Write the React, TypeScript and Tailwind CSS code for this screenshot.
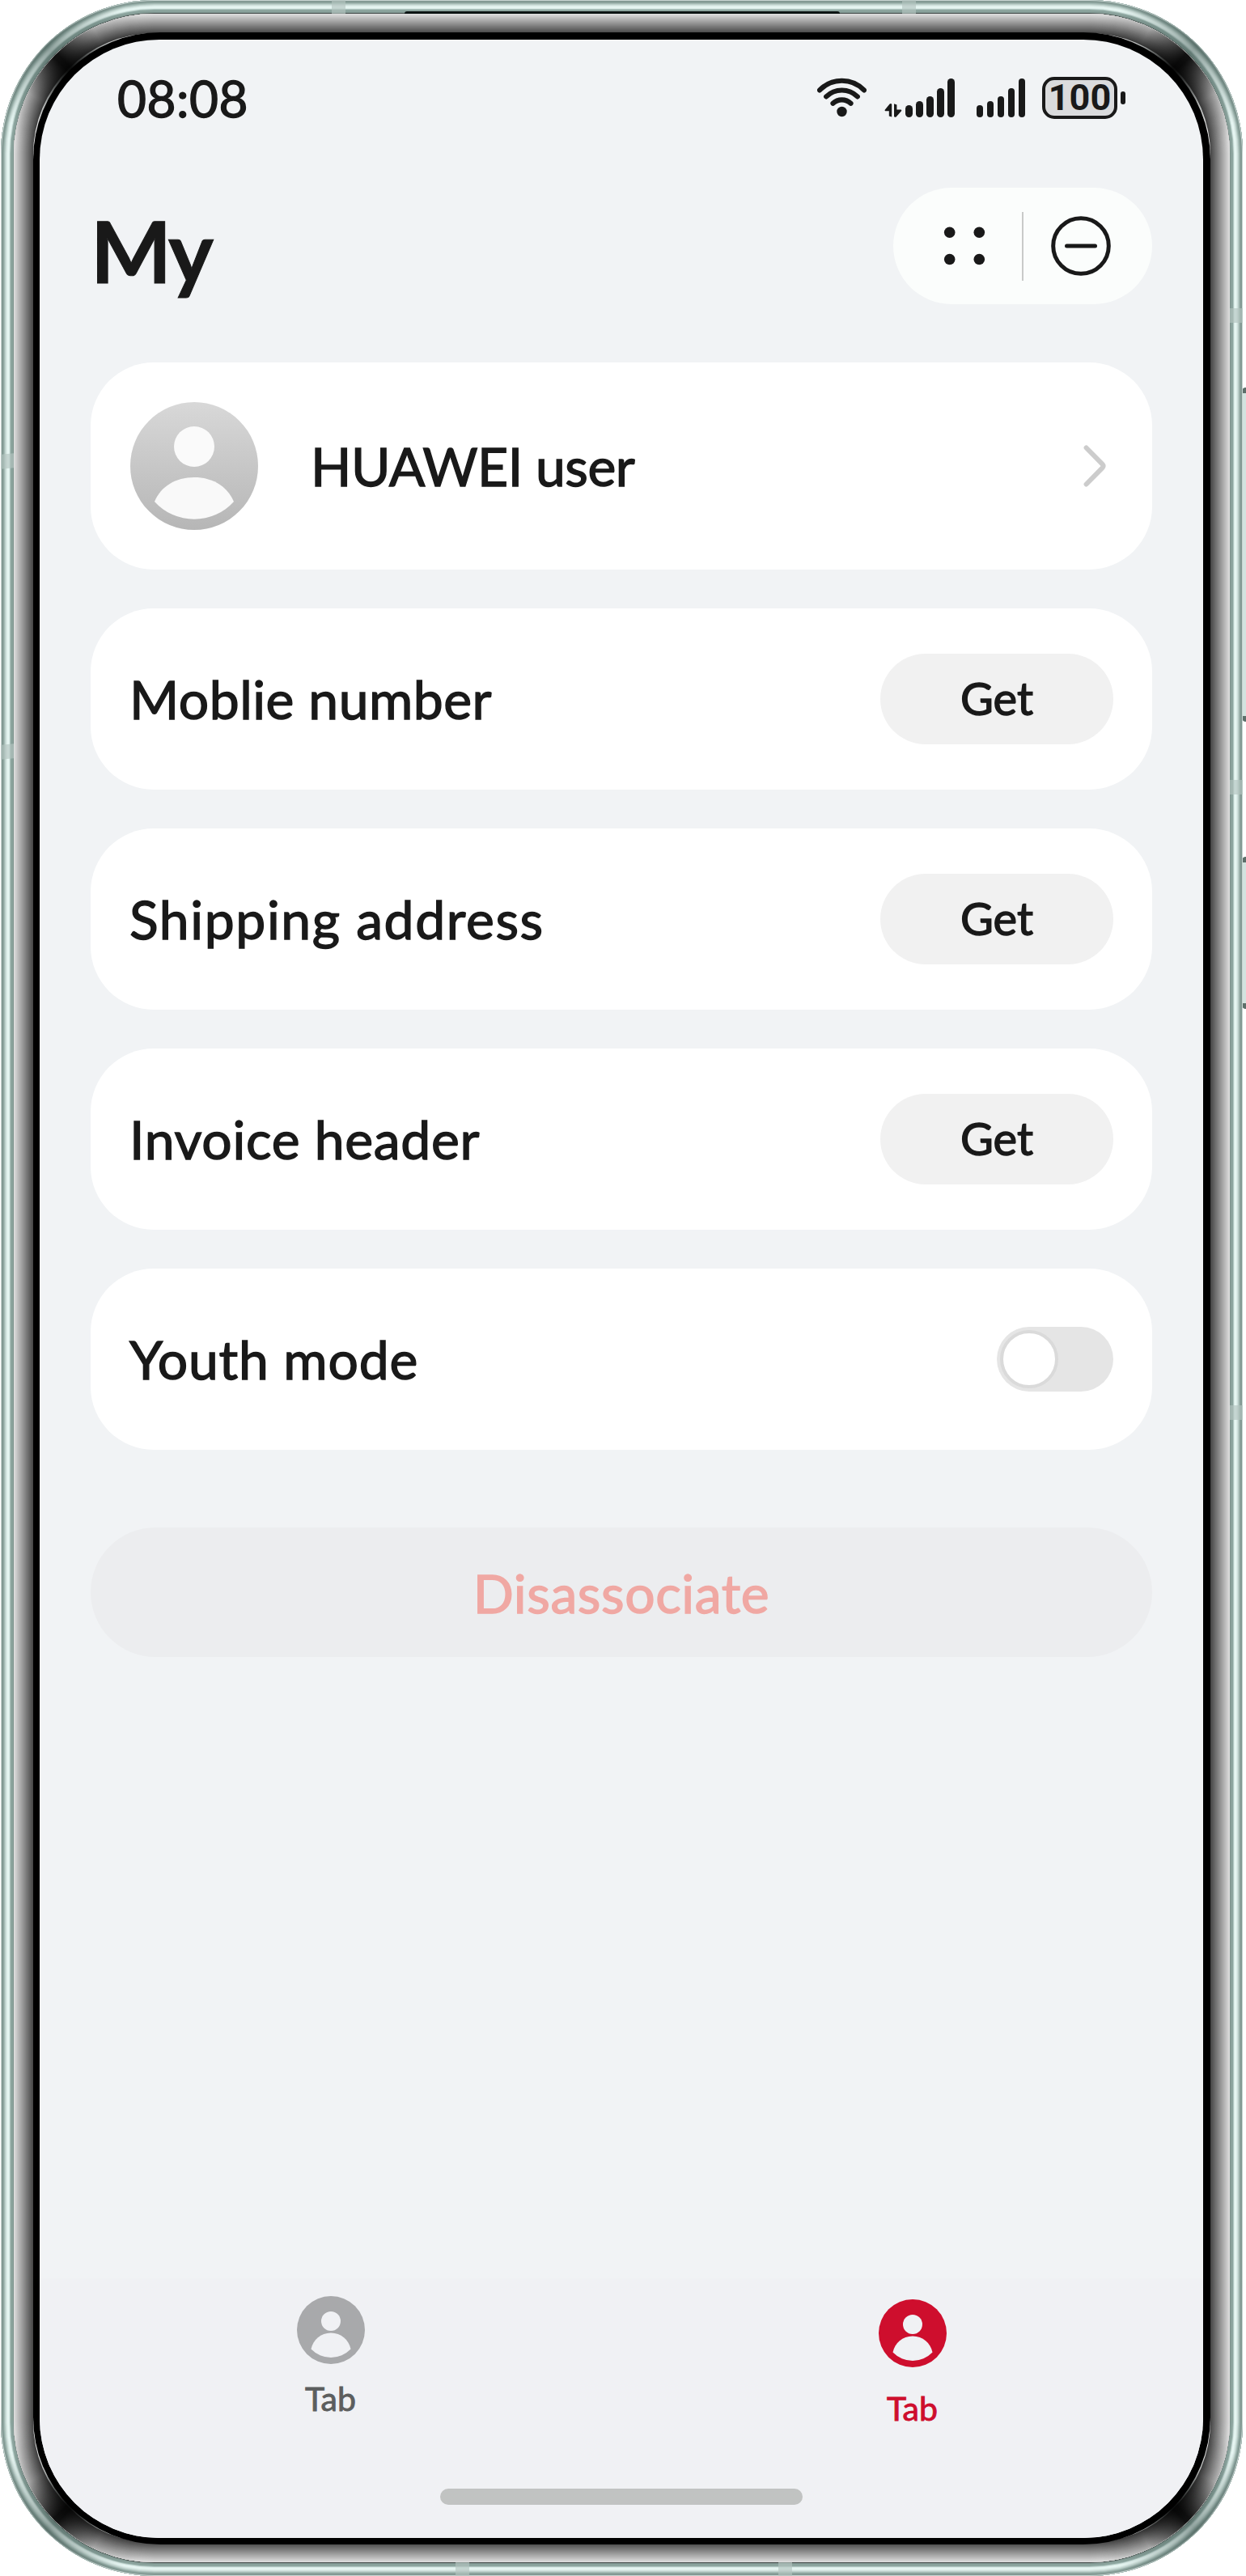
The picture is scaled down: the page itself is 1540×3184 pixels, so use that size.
import type { ReactNode } from "react";

const insetRings = (colors: string[]) =>
  colors.map((c, i) => `inset 0 0 0 ${i + 1}px ${c}`).join(", ");

const METAL = [
  "#c9d6d3", "#839993", "#839a94", "#91a8a2", "#a6bcb6", "#bccfca", "#cfe0dc", "#dcece8",
  "#e6f6f2", "#e6f5f2", "#dbece8", "#b0c6c1", "#8ea7a0", "#8aa29c", "#8aa29c", "#7d938d", "#4a5150",
];

const GLASS = Array.from({ length: 24 }, (_, i) => {
  const v = Math.round(220 - (i / 23) * 148);
  return `rgb(${v}, ${v}, ${v})`;
});

const CORNERS = [
  "left-0 top-0",
  "right-0 top-0 rotate-90",
  "right-0 bottom-0 rotate-180",
  "left-0 bottom-0 -rotate-90",
];

function CornerShade({ shade }: { shade: string }) {
  return (
    <>
      {CORNERS.map((pos) => (
        <div key={pos} className={`absolute size-[190px] ${pos} ${shade}`} />
      ))}
    </>
  );
}

const BANDS = [
  "left-[410px] top-0 h-[17px] w-[17px]",
  "left-[1115px] top-0 h-[17px] w-[17px]",
  "left-[563px] bottom-0 h-[17px] w-[17px]",
  "left-[962px] bottom-0 h-[17px] w-[17px]",
  "left-[1px] top-[561px] h-[18px] w-[16px] -skew-y-6",
  "left-[1px] top-[920px] h-[18px] w-[16px] -skew-y-6",
  "left-[1520px] top-[381px] h-[18px] w-[16px]",
  "left-[1520px] top-[964px] h-[18px] w-[16px]",
  "left-[1520px] top-[1737px] h-[18px] w-[16px]",
];

function Wifi() {
  return (
    <svg width="61" height="49" viewBox="0 0 61 49" fill="none" stroke="#191919" strokeWidth="6.2" strokeLinecap="round">
      <path d="M3.1 15.4A38 38 0 0 1 57.9 15.4" />
      <path d="M11.2 23.4A27.5 27.5 0 0 1 49.8 23.4" />
      <path d="M19.5 31.8A16 16 0 0 1 41.5 31.8" />
      <circle cx="30.5" cy="42" r="6.2" fill="#191919" stroke="none" />
    </svg>
  );
}

function Signal() {
  return (
    <div className="flex items-end gap-[4.5px]">
      <div className="h-[15px] w-[8.5px] rounded-full bg-[#191919]" />
      <div className="h-[20px] w-[8.5px] rounded-full bg-[#191919]" />
      <div className="h-[26px] w-[8.5px] rounded-full bg-[#191919]" />
      <div className="h-[36px] w-[8.5px] rounded-full bg-[#191919]" />
      <div className="h-[48px] w-[8.5px] rounded-full bg-[#191919]" />
    </div>
  );
}

function StatusBar() {
  return (
    <div className="flex h-36 shrink-0 items-center justify-between pl-[96px] pr-[96px]">
      <div className="text-[62px] leading-[72px] tracking-[0.5px] [-webkit-text-stroke:1.4px_#191919]">08:08</div>
      <div className="flex items-center">
        <div className="flex h-12 items-end">
          <Wifi />
          <svg className="ml-[22px]" width="22" height="17" viewBox="0 0 22 17" fill="#191919">
            <path d="M6.6 0.4Q8.8 -0.4 9.2 1V16.6L5.8 15.4V9.2H1.2Q0 8.6 0.9 7.4Z" />
            <path d="M14.6 16.4Q12.4 17.2 12 15.8V0.2L15.4 1.4V7.6H20.6Q21.8 8.4 20.8 9.6Z" />
          </svg>
          <div className="ml-1">
            <Signal />
          </div>
          <div className="ml-[27px]">
            <Signal />
          </div>
        </div>
        <div className="ml-[21px] flex h-[52px] w-[93px] items-center justify-center rounded-[15px] border-4 border-[#191919] bg-[#dadbdd] font-[Roboto,sans-serif] text-[45px] font-bold leading-[52px]">
          100
        </div>
        <div className="ml-1 h-4 w-1.5 rounded-[3px] bg-[#191919]" />
      </div>
    </div>
  );
}

function Header() {
  return (
    <header className="mb-[33px] flex h-[222px] shrink-0 items-center justify-between px-[63px]">
      <h1 className="mt-[10px] text-[106px] font-bold leading-[128px] tracking-[-3px] [-webkit-text-stroke:1px_#191919]">My</h1>
      <div className="flex h-36 w-80 items-center rounded-full bg-[#fbfdfc]">
        <svg className="ml-[60px]" width="56" height="56" viewBox="0 0 56 56" fill="#191919">
          <circle cx="9.7" cy="11.3" r="6.8" />
          <circle cx="46.3" cy="11.3" r="6.8" />
          <circle cx="9.7" cy="44.5" r="6.8" />
          <circle cx="46.3" cy="44.5" r="6.8" />
        </svg>
        <div className="ml-[43px] h-[85px] w-0.5 bg-[#c9cac9]" />
        <svg className="ml-[33px]" width="76" height="76" viewBox="0 0 76 76" fill="none" stroke="#191919" strokeWidth="5">
          <circle cx="38" cy="38" r="34.3" />
          <path d="M20.5 38H55.5" strokeLinecap="round" />
        </svg>
      </div>
    </header>
  );
}

function Card({ children, tall }: { children: ReactNode; tall?: boolean }) {
  return (
    <div
      className={`flex items-center justify-between rounded-[78px] bg-white px-12 text-[66px] leading-[80px] [-webkit-text-stroke:1.4px_#191919] ${
        tall ? "h-64" : "h-56"
      }`}
    >
      {children}
    </div>
  );
}

function GetButton() {
  return (
    <button className="flex h-28 w-72 items-center justify-center rounded-full bg-[#f1f1f1] pb-[2px] text-[56px] leading-[68px]">
      Get
    </button>
  );
}

function Avatar() {
  return (
    <svg width="160" height="160" viewBox="0 0 160 160">
      <defs>
        <linearGradient id="avatar" x1="0" y1="0" x2="0" y2="1">
          <stop offset="0" stopColor="#d8d8d8" />
          <stop offset="1" stopColor="#b6b6b6" />
        </linearGradient>
      </defs>
      <circle cx="80" cy="80" r="79" fill="url(#avatar)" />
      <circle cx="80" cy="56" r="25" fill="#fafafa" />
      <path d="M31 124C39 105 57 94 80 94S121 105 129 124A66 66 0 0 1 31 124Z" fill="#f9f9f9" />
    </svg>
  );
}

function TabIcon() {
  return (
    <svg width="84" height="84" viewBox="0 0 84 84">
      <circle cx="42" cy="42" r="42" fill="currentColor" />
      <circle cx="42" cy="31" r="12" fill="#f0f1f4" />
      <path d="M17.5 65.5C20 54 29.5 45.5 42 45.5S64 54 66.5 65.5A34 34 0 0 1 17.5 65.5Z" fill="#f0f1f4" />
    </svg>
  );
}

function Screen() {
  return (
    <div className="flex h-[3088px] w-[1438px] flex-col overflow-hidden rounded-[148px] bg-[#f1f3f5] font-[Lato,sans-serif] text-[#191919]">
      <StatusBar />
      <Header />
      <main className="flex flex-col gap-12 px-[63px]">
        <Card tall>
          <div className="flex items-center gap-[64px]">
            <Avatar />
            <span className="tracking-[-0.5px]">HUAWEI user</span>
          </div>
          <svg className="mr-[7px]" width="30" height="54" viewBox="0 0 30 54" fill="none" stroke="#cccccc" strokeWidth="6" strokeLinecap="round" strokeLinejoin="round">
            <path d="M3.6 4.5L23.4 24.6Q25.6 27 23.4 29.4L3.6 49.5" />
          </svg>
        </Card>
        <Card>
          <span className="tracking-[0.5px]">Moblie number</span>
          <GetButton />
        </Card>
        <Card>
          <span className="tracking-[1.6px]">Shipping address</span>
          <GetButton />
        </Card>
        <Card>
          <span className="tracking-[0.7px]">Invoice header</span>
          <GetButton />
        </Card>
        <Card>
          <span className="tracking-[0.8px]">Youth mode</span>
          <button className="flex h-20 w-36 items-center rounded-full bg-[#e5e5e5] p-1">
            <div className="size-[72px] rounded-full border-4 border-[#dadada] bg-white" />
          </button>
        </Card>
        <button className="mt-12 flex h-40 items-center justify-center rounded-full bg-[#ecedef] pt-0.5 text-[66px] leading-[80px] tracking-[0.6px] text-[#f0a8a3] [-webkit-text-stroke:1.4px_#f0a8a3]">
          Disassociate
        </button>
      </main>
      <nav className="mt-auto flex h-[321px] shrink-0 flex-col items-center bg-[#f0f1f4] text-[41px] leading-[48px]">
        <div className="flex h-[260px] w-full">
          <div className="flex flex-1 flex-col items-center gap-[19px] pt-[22px] text-[#a8a9ab]">
            <TabIcon />
            <span className="text-[#5c5e5e] [-webkit-text-stroke:0.9px_#5c5e5e]">Tab</span>
          </div>
          <div className="flex flex-1 flex-col items-center gap-[27px] pt-[26px] text-[#ce0e2d]">
            <TabIcon />
            <span className="[-webkit-text-stroke:0.9px_#ce0e2d]">Tab</span>
          </div>
        </div>
        <div className="h-5 w-[448px] rounded-full bg-[#c1c3c2]" />
      </nav>
    </div>
  );
}

export default function App() {
  return (
    <div className="relative h-[3184px] w-[1540px] overflow-hidden bg-white pl-px">
      <div className="absolute left-[1535px] top-[479px] h-[413px] w-[9px] rounded-[5px] border-y-[7px] border-[#5d6f6a] bg-[#d3e3df]" />
      <div className="absolute left-[1535px] top-[1059px] h-[188px] w-[9px] rounded-[5px] border-y-[7px] border-[#5d6f6a] bg-[#d3e3df]" />
      <div
        className="relative h-[3184px] w-[1535px] overflow-hidden rounded-[190px] pb-[17px] pl-[16px] pr-[16px] pt-[17px]"
        style={{ boxShadow: insetRings(METAL) }}
      >
        <CornerShade shade="bg-[conic-gradient(from_270deg_at_100%_100%,transparent_12deg,#2f45404d_36deg,#2f454073_45deg,#2f45404d_54deg,transparent_78deg,transparent_360deg)]" />
        <div
          className="relative h-[3150px] w-[1503px] overflow-hidden rounded-[174px] pb-[22px] pl-[24px] pr-[24px] pt-[23px]"
          style={{ boxShadow: insetRings(GLASS) }}
        >
          <CornerShade shade="bg-[conic-gradient(from_270deg_at_100%_100%,transparent_10deg,#00000038_28deg,#000000a0_37deg,#000000eb_44deg,#000000eb_46deg,#000000a0_53deg,#00000038_62deg,transparent_80deg,transparent_360deg)]" />
          <div className="relative h-[3105px] w-[1455px] rounded-[157px] bg-black pb-[8px] pl-[8px] pr-[9px] pt-[9px]">
            <Screen />
          </div>
        </div>
      </div>
      <div className="absolute left-[500px] top-[14px] h-[3px] w-[538px] rounded-t-[3px] bg-[#0c1413]" />
      {BANDS.map((b) => (
        <div key={b} className={`absolute bg-[#b3c5c0]/65 ${b}`} />
      ))}
    </div>
  );
}
